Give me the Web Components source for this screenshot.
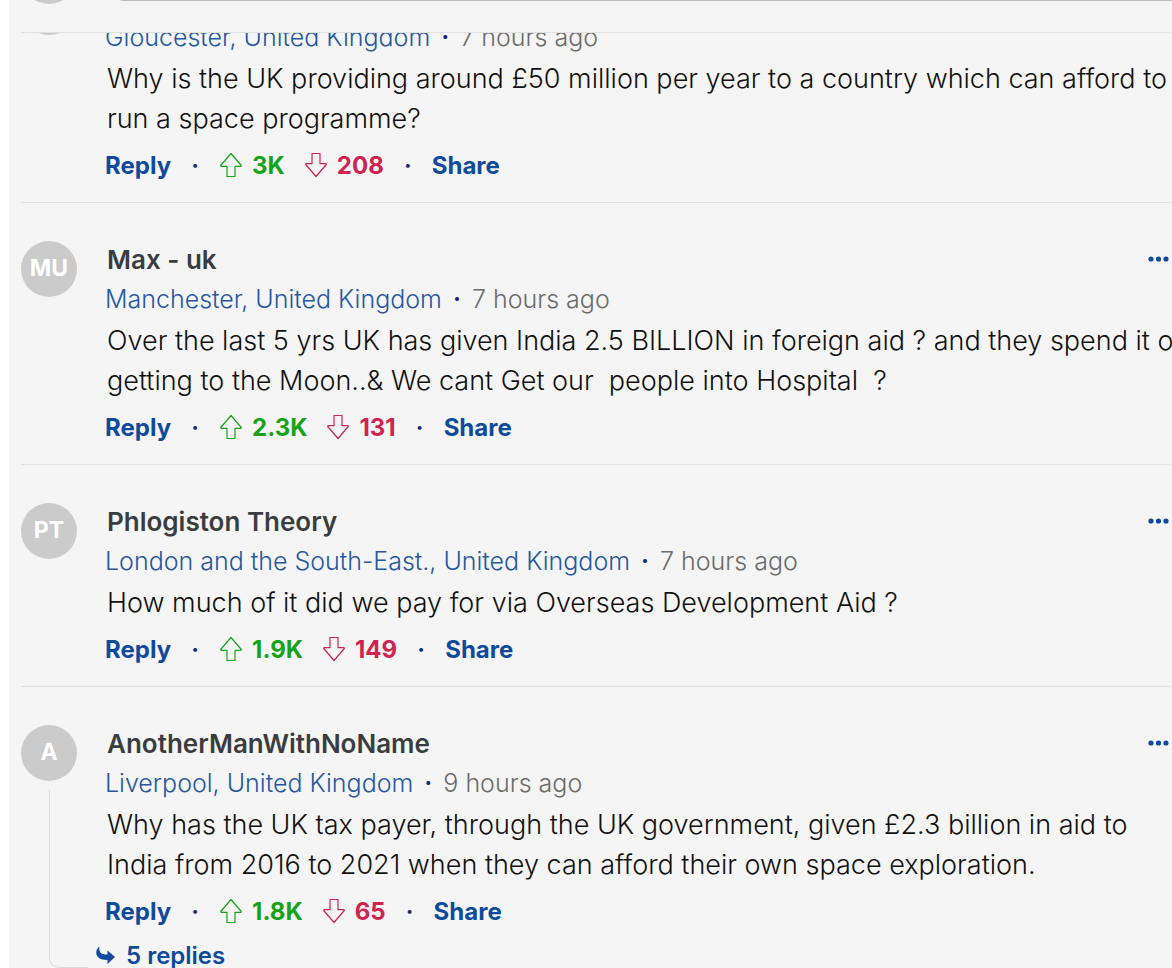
<!DOCTYPE html>
<html lang="en">
<head>
<meta charset="utf-8">
<meta name="viewport" content="width=device-width, initial-scale=1">
<title>Comments</title>
<style>
  html, body { height: 100%; margin: 0; background: #fff; }
  body { overflow: hidden; font-family: Inter, "Liberation Sans", sans-serif; }
</style>
</head>
<body>
<comments-panel>
  <comment-composer slot="composer"></comment-composer>
  <user-comment place="Gloucester, United Kingdom" time="7 hours ago" up="3K" down="208">Why is the UK providing around £50 million per year to a country which can afford to
run a space programme?</user-comment>
  <user-comment initials="MU" name="Max - uk" place="Manchester, United Kingdom" time="7 hours ago" up="2.3K" down="131">Over the last 5 yrs UK has given India 2.5 BILLION in foreign aid ? and they spend it on
getting to the Moon..&amp; We cant Get our  people into Hospital  ?</user-comment>
  <user-comment initials="PT" name="Phlogiston Theory" place="London and the South-East., United Kingdom" time="7 hours ago" up="1.9K" down="149">How much of it did we pay for via Overseas Development Aid ?</user-comment>
  <user-comment initials="A" name="AnotherManWithNoName" place="Liverpool, United Kingdom" time="9 hours ago" up="1.8K" down="65" replies="5 replies">Why has the UK tax payer, through the UK government, given £2.3 billion in aid to
India from 2016 to 2021 when they can afford their own space exploration.</user-comment>
</comments-panel>

<template id="panel">
  <style>
    :host { display: flex; flex-direction: column; height: 100vh; margin-left: 9px; padding-left: 12px; background: #f5f5f5; overflow: hidden; box-sizing: border-box; }
    main { flex: 1; min-height: 0; overflow: hidden; }
    /* the list is scrolled part-way through its first comment */
    .list { margin-top: -93px; }
  </style>
  <slot name="composer"></slot>
  <main><div class="list"><slot></slot></div></main>
</template>

<template id="composer">
  <style>
    :host { display: flex; flex: none; align-items: flex-end; height: 33px; box-sizing: border-box; padding-bottom: 28px; border-bottom: 1px solid #e0e0e0; overflow: hidden; }
    .avatar { flex: none; width: 56px; height: 56px; margin-right: 40px; border-radius: 50%; background: #cbcbcb; }
    input { flex: 1; min-width: 0; height: 56px; margin-bottom: 3px; box-sizing: border-box; border: 1px solid #bdbdbd; border-right: 0; border-radius: 6px 0 0 6px; background: #f5f5f5; font: 300 27px Inter, sans-serif; }
  </style>
  <div class="avatar"></div>
  <input type="text" aria-label="Add a comment">
</template>

<template id="vote">
  <style>
    :host { display: flex; }
    button { display: flex; align-items: center; gap: 9px; padding: 0; border: 0; background: none; font: inherit; color: var(--vote); cursor: pointer; }
    svg { display: block; width: 24px; height: 26px; fill: none; stroke: currentColor; stroke-width: 1.2; stroke-linejoin: round; }
    :host([direction="down"]) svg { transform: rotate(180deg); }
  </style>
  <button type="button"><svg viewBox="0 0 24 26" aria-hidden="true"><path d="M12 1.5 22.3 13.5Q22.4 14.2 21.7 14.3H16V24.5H8V14.3H2.3Q1.6 14.2 1.7 13.5Z"/></svg><span></span></button>
</template>

<template id="comment">
  <style>
    :host { display: block; border-top: 1px solid #e0e0e0; padding: 38px 0 17px; }
    article { display: flex; }
    .side { display: flex; flex-direction: column; width: 56px; margin-right: 28px; flex: none; }
    .avatar { flex: none; display: flex; align-items: center; justify-content: center; height: 56px; box-sizing: border-box; padding-bottom: 2px; border-radius: 50%; background: #cbcbcb; color: #fff; font-size: 23px; font-weight: 700; }
    .thread { display: none; flex: 1; margin: 9px -11px 0 28px; border: 1px solid #dcdcdc; border-width: 0 0 1px 1px; border-bottom-left-radius: 10px; }
    .body { flex: 1; min-width: 0; }
    header { display: flex; justify-content: space-between; height: 38px; box-sizing: border-box; align-items: center; padding: 0 3px 2px 0; }
    h3 { margin: 0 0 0 2px; font-size: 26px; font-weight: 600; color: #3a3d40; }
    a, .reply, .share, .replies { color: #0f4a9c; text-decoration: none; }
    button { padding: 0; border: 0; background: none; font: inherit; cursor: pointer; }
    .more { display: flex; color: #0f4a9c; }
    .more svg { display: block; width: 21px; height: 6px; fill: currentColor; }
    .meta { display: flex; align-items: center; height: 40px; font-size: 25px; font-weight: 300; white-space: nowrap; }
    .meta a { color: #2558a0; }
    .dot { width: 30px; text-align: center; color: #0f2a78; font-weight: 600; }
    time { color: #6c6c6c; }
    p { margin: 2px 0 6px 2px; font-size: 27px; line-height: 40px; font-weight: 300; color: #111; white-space: pre; }
    footer { display: flex; align-items: center; height: 40px; font-size: 24px; font-weight: 700; }
    footer .dot { width: 48px; }
    vote-button { --vote: #17a317; }
    vote-button[direction="down"] { --vote: #cf2350; margin-left: 19px; }
    .replies { display: none; align-items: center; gap: 11px; height: 48px; margin-left: -9px; font-size: 24px; font-weight: 600; }
    .replies svg { width: 19px; height: 18px; fill: currentColor; }
    :host([replies]) { padding-bottom: 0; }
    :host([replies]) .thread { display: block; margin-bottom: 11px; }
    :host([replies]) .replies { display: flex; }
  </style>
  <article>
    <div class="side"><div class="avatar"></div><div class="thread"></div></div>
    <div class="body">
      <header><h3></h3><button class="more" type="button" aria-label="More options"><svg viewBox="0 0 21 6"><circle cx="3" cy="3" r="2.6"/><circle cx="10.5" cy="3" r="2.6"/><circle cx="18" cy="3" r="2.6"/></svg></button></header>
      <div class="meta"><a href="#"></a><span class="dot">·</span><time></time></div>
      <p><slot></slot></p>
      <footer><button class="reply" type="button">Reply</button><span class="dot">·</span><vote-button class="up" direction="up"></vote-button><vote-button class="down" direction="down"></vote-button><span class="dot">·</span><button class="share" type="button">Share</button></footer>
      <button class="replies" type="button"><svg viewBox="0 0 19 18" aria-hidden="true"><path d="M3.5 .5C0 3-.8 7.500 1.500 10.500 3.500 13.200 7 14 11.500 14V18L19 11 11.500 4.500V8.500C8 8.500 5.500 8 4.300 6.500 3 4.500 3 2.500 3.500 .5Z"/></svg><span></span></button>
    </div>
  </article>
</template>

<script>
  class Base extends HTMLElement {
    constructor() {
      super();
      const source = document.getElementById(this.constructor.template);
      this.attachShadow({ mode: 'open' }).append(source.content.cloneNode(true));
    }
    $(selector) { return this.shadowRoot.querySelector(selector); }
  }
  class CommentsPanel extends Base { static template = 'panel'; }
  class CommentComposer extends Base { static template = 'composer'; }
  class VoteButton extends Base {
    static template = 'vote';
    static observedAttributes = ['count', 'direction'];
    attributeChangedCallback() {
      const count = this.getAttribute('count') || '';
      this.$('span').textContent = count;
      this.$('button').setAttribute('aria-label', `${this.getAttribute('direction')} vote ${count}`);
    }
  }
  class UserComment extends Base {
    static template = 'comment';
    connectedCallback() {
      const get = key => this.getAttribute(key) || '';
      this.$('.avatar').textContent = get('initials');
      this.$('h3').textContent = get('name');
      this.$('a').textContent = get('place');
      this.$('time').textContent = get('time');
      this.$('.up').setAttribute('count', get('up'));
      this.$('.down').setAttribute('count', get('down'));
      this.$('.replies span').textContent = get('replies');
    }
  }
  customElements.define('vote-button', VoteButton);
  customElements.define('user-comment', UserComment);
  customElements.define('comment-composer', CommentComposer);
  customElements.define('comments-panel', CommentsPanel);
</script>
</body>
</html>
